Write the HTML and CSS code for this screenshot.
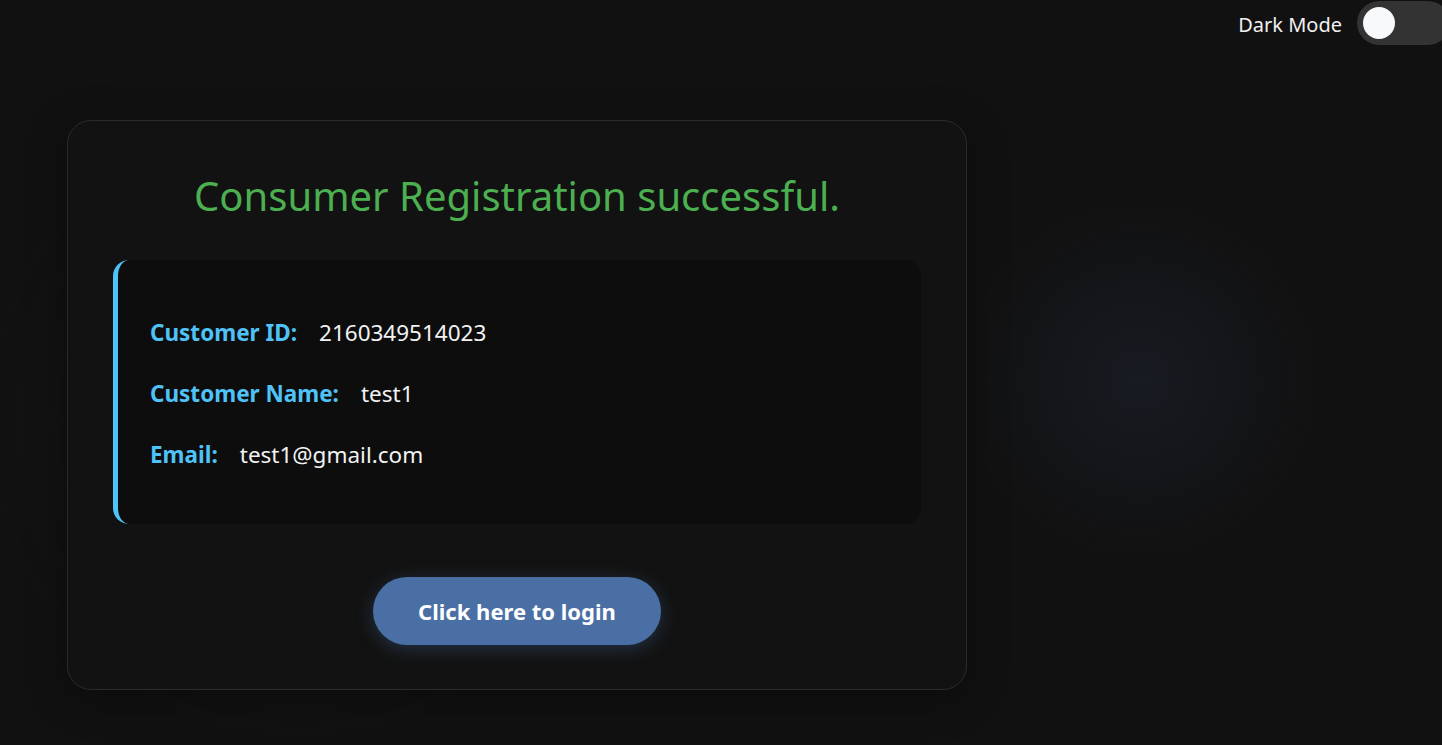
FILE: index.html
```html
<!DOCTYPE html>
<html lang="en">
<head>
<meta charset="utf-8">
<title>Registration</title>
<link rel="stylesheet" href="styles.css">
</head>
<body>
<div class="theme-toggle">
  <span class="theme-label">Dark Mode</span>
  <span class="switch"><span class="knob"></span></span>
</div>
<main class="page">
  <section class="card">
    <h1 class="title">Consumer Registration successful.</h1>
    <div class="info">
      <p class="row"><span class="label">Customer ID:</span><span class="value">2160349514023</span></p>
      <p class="row"><span class="label">Customer Name:</span><span class="value">test1</span></p>
      <p class="row"><span class="label">Email:</span><span class="value">test1@gmail.com</span></p>
    </div>
    <div class="actions">
      <button class="login-btn" type="button">Click here to login</button>
    </div>
  </section>
</main>
</body>
</html>
```
FILE: styles.css
```css
* { box-sizing: border-box; }
html, body { height: 100%; }
body {
  margin: 0;
  background-color: #111111;
  background-image:
    radial-gradient(circle at 1140px 380px, rgba(30, 36, 50, 0.5) 0, rgba(30, 36, 50, 0) 180px),
    radial-gradient(circle at 300px 420px, rgba(24, 24, 24, 0.6) 0, rgba(24, 24, 24, 0) 320px);
  font-family: "Noto Sans", "Open Sans", sans-serif;
  color: #eeeeee;
  overflow: hidden;
}
.theme-toggle {
  position: absolute;
  top: 0;
  right: -8px;
  display: flex;
  align-items: center;
  gap: 15px;
  height: 46px;
}
.theme-label {
  font-size: 20px;
  line-height: 24px;
  padding-top: 3px;
  color: #f0f0f0;
}
.switch {
  width: 93px;
  height: 44px;
  border-radius: 22px;
  background: #333333;
  display: flex;
  align-items: center;
  padding-left: 6px;
}
.knob {
  width: 32px;
  height: 32px;
  border-radius: 50%;
  background: #f8f9fb;
}
.page {
  padding: 120px 0 0 67px;
}
.card {
  width: 900px;
  height: 570px;
  border: 1px solid #2b2b2b;
  border-radius: 24px;
  background: #121212;
  padding: 52px 45px 44px;
  box-shadow: 0 8px 40px rgba(0, 0, 0, 0.35);
}
.title {
  margin: 0 0 42px;
  text-align: center;
  font-size: 40px;
  line-height: 45px;
  font-weight: 400;
  color: #4caf50;
}
.info {
  background: #0d0d0d;
  border-left: 5px solid #4fc3f7;
  border-radius: 16px;
  padding: 58px 32px 54px;
  display: flex;
  flex-direction: column;
  gap: 31px;
}
.row {
  margin: 0;
  font-size: 22.5px;
  line-height: 30px;
  display: flex;
  gap: 22px;
}
.label {
  font-weight: 700;
  color: #4fc3f7;
}
.value {
  color: #f2f2f2;
}
.actions {
  display: flex;
  justify-content: center;
  margin-top: 53px;
}
.login-btn {
  width: 288px;
  height: 68px;
  border: none;
  border-radius: 34px;
  background: #4a6fa5;
  color: #ffffff;
  font-family: inherit;
  font-size: 22px;
  font-weight: 700;
  box-shadow: 0 4px 18px rgba(74, 111, 165, 0.35);
  cursor: pointer;
}
```
